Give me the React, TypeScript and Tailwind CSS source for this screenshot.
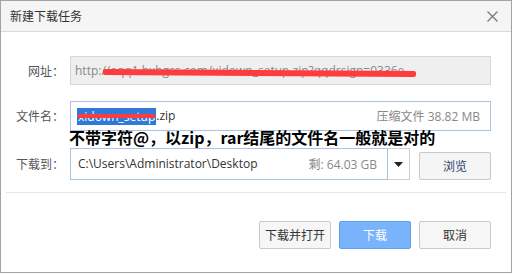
import React from "react";

const font = { fontFamily: '"Open Sans", "Noto Sans CJK SC", sans-serif' };
const cjk = { fontFamily: '"Noto Sans CJK SC", sans-serif' };

export default function App() {
  return (
    <div className="w-[514px] h-[274px] bg-white" style={font}>
      <div className="relative w-[512px] h-[273px] border border-[#a3a3a3] bg-white flex flex-col text-[12px]">
        {/* Title bar */}
        <div className="h-[31px] shrink-0 bg-[#f5f5f5] border-b border-[#d9d9d9] flex items-center justify-between pl-[9px] pr-[13px]">
          <span className="text-[#333] text-[12px]" style={cjk}>新建下载任务</span>
          <svg width="11" height="11" viewBox="0 0 11 11" className="mt-[1px]">
            <path d="M0.5 0.5 L10.5 10.5 M10.5 0.5 L0.5 10.5" stroke="#7a7a7a" strokeWidth="1.3" />
          </svg>
        </div>

        {/* Body */}
        <div className="flex flex-col pt-[24px] pr-[20px]">
          {/* URL row */}
          <div className="flex items-center h-[29px]">
            <div className="w-[63px] mr-[6px] text-right text-[#555]" style={cjk}>网址：</div>
            <div className="relative flex-1 h-full bg-[#efefef] border border-[#d6d6d6] flex items-center pl-[4px] text-[#888] overflow-hidden whitespace-nowrap">
              http://eqq1.bxbgss.com/xidown_setup.zip?qqdrsign=0336e
              <div className="absolute left-[32px] top-[13px] w-[313px] h-[6px] bg-[#ff3b3b] rounded-[2px] rotate-[0.4deg]" />
            </div>
          </div>

          {/* Filename row */}
          <div className="flex items-center h-[30px] mt-[16px]">
            <div className="w-[63px] mr-[6px] text-right text-[#555]" style={cjk}>文件名：</div>
            <div className="flex-1 h-full border border-[#a9c3e6] flex items-center pl-[6px] pr-[10px] whitespace-nowrap">
              <span className="relative bg-[#2f7ad8] text-white h-[17px] leading-[17px] px-[1px]">
                xidown_setup
                <span className="absolute left-[1px] right-[1px] top-[6px] h-[4px] bg-[#ff3b3b]" />
              </span>
              <span className="text-[#333]">.zip</span>
              <span className="ml-auto text-[#888]">
                <span style={cjk}>压缩文件</span> 38.82 MB
              </span>
            </div>
          </div>

          {/* Save row */}
          <div className="flex items-center h-[32px] mt-[17px]">
            <div className="w-[63px] mr-[6px] text-right text-[#555]" style={cjk}>下载到：</div>
            <div className="w-[340px] h-full flex">
              <div className="w-[318px] h-full border border-[#a9c3e6] flex items-center pl-[7px] pr-[10px] whitespace-nowrap">
                <span className="text-[#333]">C:\Users\Administrator\Desktop</span>
                <span className="ml-auto text-[#888]">
                  <span style={cjk}>剩</span>: 64.03 GB
                </span>
              </div>
              <div className="flex-1 h-full border-y border-r border-[#cfcfcf] flex items-center justify-center">
                <svg width="9" height="5" viewBox="0 0 9 5">
                  <path d="M0 0 L9 0 L4.5 5 Z" fill="#222" />
                </svg>
              </div>
            </div>
            <button className="ml-auto mt-[4px] w-[72px] h-[28px] bg-[#f5f5f5] border border-[#c8c8c8] rounded-[2px] text-[#2b3f66]" style={cjk}>
              浏览
            </button>
          </div>
        </div>

        {/* separator */}
        <div className="mx-[5px] mt-[12px] h-px bg-[#e6e6e6]" />

        {/* buttons */}
        <div className="flex justify-end gap-[8px] pr-[20px] mt-[28px]" style={cjk}>
          <button className="w-[72px] h-[28px] bg-[#f6f6f6] border border-[#c9c9c9] rounded-[2px] text-[#333] text-[12px]">下载并打开</button>
          <button className="w-[72px] h-[28px] bg-[#78b3fc] border border-[#5c9ff3] rounded-[2px] text-white text-[12px]">下载</button>
          <button className="w-[72px] h-[28px] bg-[#f6f6f6] border border-[#c9c9c9] rounded-[2px] text-[#333] text-[12px]">取消</button>
        </div>

        {/* annotation overlay */}
        <div className="absolute left-[68px] top-[126px] text-[16px] font-bold text-black leading-[20px] whitespace-nowrap" style={cjk}>
          不带字符@，以zip，rar结尾的文件名一般就是对的
        </div>
      </div>
    </div>
  );
}
